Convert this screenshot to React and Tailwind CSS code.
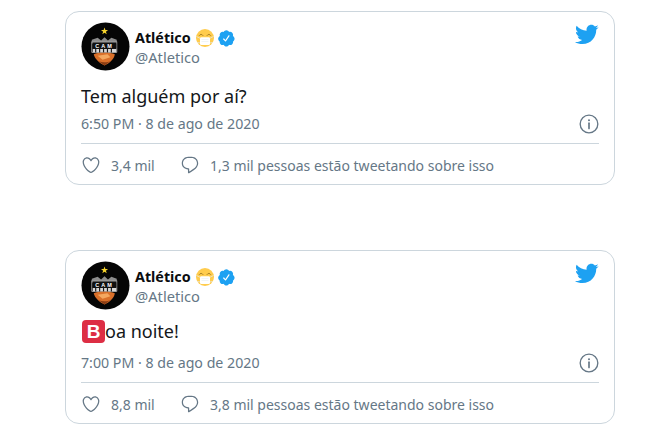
import React from "react";

const Avatar = () => (
  <svg viewBox="0 0 50 50" className="w-[49px] h-[49px] shrink-0">
    <circle cx="25" cy="25" r="24.5" fill="#050505" />
    <polygon points="24,5.5 24.9,8.2 27.6,8.2 25.4,9.9 26.3,12.5 24,10.9 21.7,12.5 22.6,9.9 20.4,8.2 23.1,8.2" fill="#f6d32d" />
    <path d="M11 18 L17 16 L20.5 19 L24 15.5 L27.5 19 L31 16 L36.5 18 L36.5 22 L11 22 Z" fill="#8c8c8c" />
    <path d="M11 20 H36.5 V31 H11 Z" fill="none" stroke="#9a9a9a" strokeWidth="1" />
    <path d="M12 21 H36 V27 H12 Z" fill="#101010" />
    <path d="M12 27.5 H36 V31 H12 Z" fill="#d8d8d8" />
    <path d="M15 27.5 V31 M19 27.5 V31 M23 27.5 V31 M27 27.5 V31 M31 27.5 V31" stroke="#1a1a1a" strokeWidth="1.2" />
    <path d="M13 33 C17 31 30 31 34.5 33 C34 38 29 42 24 44.5 C19 42 14 38 13 33 Z" fill="#d9702a" />
    <path d="M17 34.5 L27 33 L30 36 L22 38.5 Z" fill="#f4a860" />
    <path d="M18 40 C22 41.5 27 41.5 30.5 39.5 L24 44.5 Z" fill="#8a3d14" />
    <text x="24" y="26.3" textAnchor="middle" fontSize="5.6" fontWeight="700" fill="#fff" letterSpacing="2" fontFamily="Liberation Sans, sans-serif">CAM</text>
  </svg>
);

const MaskEmoji = () => (
  <svg viewBox="0 0 36 36" className="w-[18px] h-[18px] shrink-0 ml-[5px]">
    <circle cx="18" cy="18" r="18" fill="#ffcc4d" />
    <path d="M6.5 13 C8.5 10 12 10 14 13 M22 13 C24 10 27.5 10 29.5 13" stroke="#7a5a10" strokeWidth="1.3" fill="none" strokeLinecap="round" />
    <path d="M1 15 L9 19 M35 15 L27 19 M3 27 L9 28 M33 27 L27 28" stroke="#e1e8ed" strokeWidth="1.5" />
    <rect x="8" y="16.5" width="20" height="15.5" rx="2.5" fill="#fff" />
    <path d="M11 21 H25 M11 25 H25" stroke="#e1e8ed" strokeWidth="1" />
  </svg>
);

const Verified = () => (
  <svg viewBox="0 0 24 24" className="w-[18.75px] h-[18.75px] shrink-0 ml-[3px]" fill="#1da1f2">
    <path d="M22.5 12.5c0-1.58-.875-2.95-2.148-3.6.154-.435.238-.905.238-1.4 0-2.21-1.71-3.998-3.818-3.998-.47 0-.92.084-1.336.25C14.818 2.415 13.51 1.5 12 1.5s-2.816.917-3.437 2.25c-.415-.165-.866-.25-1.336-.25-2.11 0-3.818 1.79-3.818 4 0 .494.083.964.237 1.4-1.272.65-2.147 2.018-2.147 3.6 0 1.495.782 2.798 1.942 3.486-.02.17-.032.34-.032.514 0 2.21 1.708 4 3.818 4 .47 0 .92-.086 1.335-.25.62 1.334 1.926 2.25 3.437 2.25 1.512 0 2.818-.916 3.437-2.25.415.163.865.248 1.336.248 2.11 0 3.818-1.79 3.818-4 0-.174-.012-.344-.033-.513 1.158-.687 1.943-1.99 1.943-3.484zm-6.616-3.334l-4.334 6.5c-.145.217-.382.334-.625.334-.143 0-.288-.04-.416-.126l-.115-.094-2.415-2.415c-.293-.293-.293-.768 0-1.06s.768-.294 1.06 0l1.77 1.767 3.825-5.74c.23-.345.696-.436 1.04-.207.346.23.44.696.21 1.04z" />
  </svg>
);

const Bird = () => (
  <svg viewBox="0 0 24 24" className="w-[25px] h-[25px] shrink-0" fill="#1da1f2">
    <path d="M23.643 4.937c-.835.37-1.732.62-2.675.733.962-.576 1.7-1.49 2.048-2.578-.9.534-1.897.922-2.958 1.13-.85-.904-2.06-1.47-3.4-1.47-2.572 0-4.658 2.086-4.658 4.66 0 .364.042.718.12 1.06-3.873-.195-7.304-2.05-9.602-4.868-.4.69-.63 1.49-.63 2.342 0 1.616.823 3.043 2.072 3.878-.764-.025-1.482-.234-2.11-.583v.06c0 2.257 1.605 4.14 3.737 4.568-.392.106-.803.162-1.227.162-.3 0-.593-.028-.877-.082.593 1.85 2.313 3.198 4.352 3.234-1.595 1.25-3.604 1.995-5.786 1.995-.376 0-.747-.022-1.112-.065 2.062 1.323 4.51 2.093 7.14 2.093 8.57 0 13.255-7.098 13.255-13.254 0-.2-.005-.402-.014-.602.91-.658 1.7-1.477 2.323-2.41z" />
  </svg>
);

const Info = () => (
  <svg viewBox="0 0 24 24" className="w-[20px] h-[20px] shrink-0" fill="none" stroke="#657786" strokeWidth="1.6">
    <circle cx="12" cy="12" r="10.6" />
    <path d="M12 11v6.5" strokeWidth="2" strokeLinecap="round" />
    <circle cx="12" cy="7.4" r="1.2" fill="#657786" stroke="none" />
  </svg>
);

const Heart = () => (
  <svg viewBox="0 0 24 24" className="w-[20px] h-[20px] shrink-0" fill="#657786">
    <path d="M12 21.638h-.014C9.403 21.59 1.95 14.856 1.95 8.478c0-3.064 2.525-5.754 5.403-5.754 2.29 0 3.83 1.58 4.646 2.73.814-1.148 2.354-2.73 4.645-2.73 2.88 0 5.404 2.69 5.404 5.755 0 6.376-7.454 13.11-10.037 13.157H12zM7.354 4.225c-2.08 0-3.903 1.988-3.903 4.255 0 5.74 7.034 11.596 8.55 11.658 1.518-.062 8.55-5.917 8.55-11.658 0-2.267-1.823-4.255-3.903-4.255-2.528 0-3.94 2.936-3.952 2.965-.23.562-1.156.562-1.387 0-.014-.03-1.425-2.965-3.954-2.965z" />
  </svg>
);

const Reply = () => (
  <svg viewBox="0 0 24 24" className="w-[20px] h-[20px] shrink-0" fill="#657786">
    <path d="M14.046 2.242l-4.148-.01h-.002c-4.374 0-7.8 3.427-7.8 7.802 0 4.098 3.186 7.206 7.465 7.37v3.828c0 .108.044.286.12.403.142.225.384.347.632.347.138 0 .277-.038.402-.118.264-.168 6.473-4.14 8.088-5.506 1.902-1.61 3.04-3.97 3.043-6.312v-.017c-.006-4.367-3.43-7.787-7.8-7.788zm3.787 12.972c-1.134.96-4.862 3.405-6.772 4.643V16.67c0-.414-.335-.75-.75-.75h-.396c-3.66 0-6.318-2.476-6.318-5.886 0-3.534 2.768-6.302 6.3-6.302l4.147.01h.002c3.532 0 6.3 2.766 6.302 6.296-.003 2.148-1.05 4.18-2.514 5.176z" />
  </svg>
);

const Tweet = ({ body, time, likes, talking, bodyClass }) => (
  <div className="w-[550px] h-[174px] border border-[#ccd6dd] rounded-[14px] px-[15px] pt-[10px] bg-white flex flex-col">
    <div className="flex items-start">
      <Avatar />
      <div className="ml-[5px] flex flex-col">
        <div className="flex items-center h-[32px] text-[14.3px] font-bold text-[#0b0d0f] leading-none">
          <span>Atlético</span>
          <MaskEmoji />
          <Verified />
        </div>
        <div className="text-[14.7px] text-[#657786] leading-[20px] -mt-[7px]">@Atletico</div>
      </div>
      <div className="ml-auto">
        <Bird />
      </div>
    </div>
    <div className={bodyClass}>{body}</div>
    <div className="flex items-center justify-between text-[14.2px] text-[#657786] h-[20px]">
      <span>{time}</span>
      <Info />
    </div>
    <div className="h-px bg-[#ccd6dd] mt-[9px]" />
    <div className="flex items-center text-[14px] text-[#657786] mt-[11px] h-[20px] whitespace-nowrap">
      <Heart />
      <span className="ml-[10px] w-[44px]">{likes}</span>
      <span className="ml-[25px]"><Reply /></span>
      <span className="ml-[10px]">{talking}</span>
    </div>
  </div>
);

export default function App() {
  return (
    <div className="min-h-screen bg-white pl-[65px] pt-[11px] flex flex-col gap-[65px] font-['Noto_Sans',sans-serif]">
      <Tweet
        body="Tem alguém por aí?"
        time="6:50 PM · 8 de ago de 2020"
        likes="3,4 mil"
        talking="1,3 mil pessoas estão tweetando sobre isso"
        bodyClass="text-[18px] leading-[26px] text-[#14171a] mt-[12px] mb-[5px] h-[26px]"
      />
      <Tweet
        body={
          <span className="flex items-center">
            <span className="w-[23px] h-[23px] ml-px rounded-[4px] bg-[#dd2e44] text-white font-bold text-[19px] leading-none flex items-center justify-center font-['Liberation_Sans',sans-serif]">B</span>
            <span>oa noite!</span>
          </span>
        }
        time="7:00 PM · 8 de ago de 2020"
        likes="8,8 mil"
        talking="3,8 mil pessoas estão tweetando sobre isso"
        bodyClass="text-[18px] leading-[26px] text-[#14171a] mt-[8px] mb-[9px] h-[26px]"
      />
    </div>
  );
}
